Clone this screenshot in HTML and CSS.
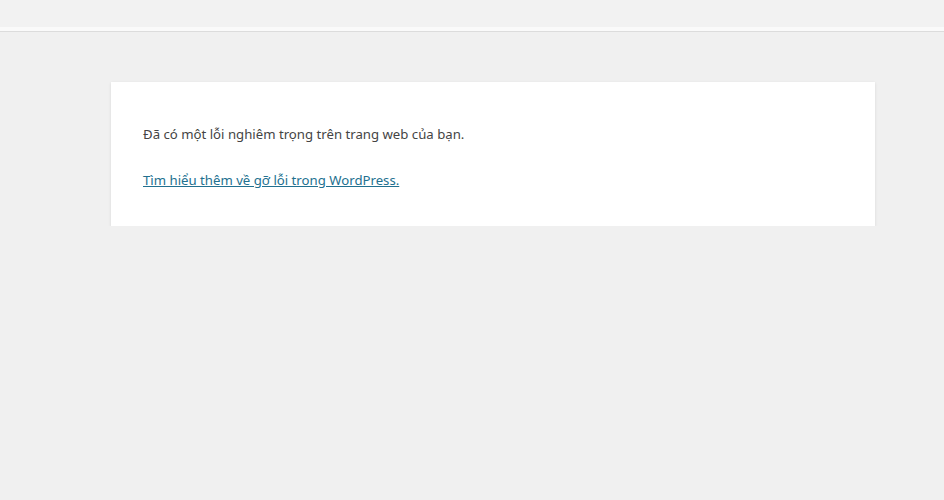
FILE: index.html
```html
<!DOCTYPE html>
<html lang="vi">
  <head>
    <meta charset="UTF-8" />
    <meta name="viewport" content="width=device-width, initial-scale=1.0" />
    <title>WordPress › Lỗi</title>
    <link rel="stylesheet" href="styles.css">
  </head>
  <body>
    <div class="top-strip"></div>
    <div class="wp-die-message">
      <p>Đã có một lỗi nghiêm trọng trên trang web của bạn.</p>
      <p><a href="#">Tìm hiểu thêm về gỡ lỗi trong WordPress.</a></p>
    </div>
  </body>
</html>
```

FILE: styles.css
```css
/* Error page */
html {
  background: #f0f0f0;
}

body {
  margin: 0;
  font-family: "Noto Sans", "Open Sans", sans-serif;
  color: #444;
}

.top-strip {
  height: 27px;
  background: #f2f2f2;
  border-bottom: 4px solid #fafafa;
  box-shadow: 0 1px 0 #dcdcdc;
}

.wp-die-message {
  width: 700px;
  margin: 51px 0 0 111px;
  padding: 17px 32px 15px;
  background: #fff;
  box-shadow: 0 1px 3px rgba(0, 0, 0, 0.1);
}

.wp-die-message p {
  font-size: 13.2px;
  line-height: 21px;
  margin: 25px 0 20px;
}

.wp-die-message a {
  color: #22708f;
}
```
